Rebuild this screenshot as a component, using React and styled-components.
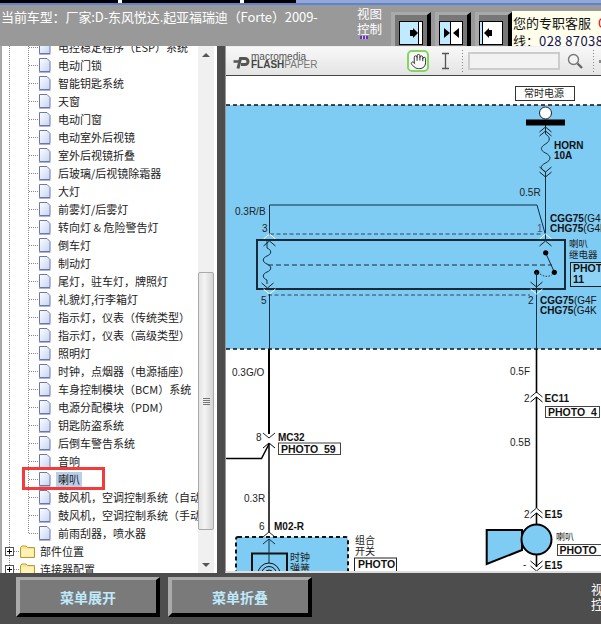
import React from 'react';
import styled, { createGlobalStyle } from 'styled-components';
import { Hand } from 'lucide-react';

const CJK = `"Noto Sans CJK SC", "Liberation Sans", sans-serif`;
const LATIN = `"Liberation Sans", "Noto Sans CJK SC", sans-serif`;

const GlobalStyle = createGlobalStyle`
  html, body { margin: 0; padding: 0; background: #4d4d4d; }
  * { box-sizing: border-box; }
`;

const Page = styled.div`
  width: 601px; height: 624px;
  display: flex; flex-direction: column;
  overflow: hidden;
  font-family: ${CJK};
`;

/* header */
const TitleStrip = styled.div`
  height: 5px; flex: none;
  background: linear-gradient(#93a8d6 0 3px, #5f84cf 3px 5px);
  display: flex;
`;
const TitleDark = styled.div`
  width: 296px; height: 3px;
  background: repeating-linear-gradient(90deg, #000 0 118px, #fff 118px 122px);
`;
const Header = styled.header`
  height: 41px; flex: none;
  background: #999;
  display: flex;
  overflow: hidden;
`;
const Model = styled.div`
  width: 357px; flex: none;
  padding: 2px 0 0 1px;
  color: #fff; font-size: 13px; line-height: 20px;
  letter-spacing: -0.1px;
  white-space: nowrap;
`;
const ViewLabel = styled.div`
  width: 34px; flex: none;
  padding-top: 1px;
  color: #fff; font-size: 12.5px; line-height: 15px;
`;
const Marks = styled.div`
  width: 8px; height: 3px; margin-left: 3px;
  background: repeating-linear-gradient(90deg, #6a2fd0 0 2px, #d8d0f0 2px 3px);
`;
const ViewButtons = styled.div`
  display: flex; gap: 4px;
  padding-top: 7px;
`;
const ViewButton = styled.button`
  width: ${p => p.$w}px; height: 34px;
  margin: 0; padding: 5px 0 0 ${p => p.$pad}px;
  background: #777;
  border-style: solid;
  border-width: 3px 4px 0 4px;
  border-color: #aaa #000 #aaa #aaa;
  display: block;
`;
const Ad = styled.div`
  flex: 1; margin-top: 6px;
  background: #ffffec;
  padding: 3px 0 0 1px;
  color: #111; font-size: 13px; line-height: 18px;
  white-space: nowrap; overflow: hidden;
`;
const Red = styled.span`color: #e00; margin-left: 7px;`;
const Phone = styled.span`color: #101060; letter-spacing: 0.4px;`;

/* middle */
const Main = styled.main`
  flex: 1; min-height: 0;
  display: flex;
  background: #4d4d4d;
`;
const TreePanel = styled.aside`
  width: 217px; flex: none;
  background: #fff;
  border-left: 2px solid #a8a8a8;
  padding-right: 3px;
  display: flex;
  overflow: hidden;
`;
const Tree = styled.div`
  width: 196px; flex: none;
  overflow: hidden;
  background: repeating-linear-gradient(#888 0 1px, transparent 1px 2px) 7px 0 / 1px 100% no-repeat;
`;
const Branch = styled.div`
  margin-top: -8px;
  background: repeating-linear-gradient(#888 0 1px, transparent 1px 2px) 26px 0 / 1px calc(100% - 9px) no-repeat;
`;
const Row = styled.div`
  position: relative;
  height: 18px;
  display: flex; align-items: center;
  padding-left: ${p => (p.$root ? 3 : 27)}px;
  font-size: 11px; color: #222;
  white-space: nowrap;
  ${p => p.$marked && `
    &::after {
      content: '';
      box-sizing: border-box;
      position: absolute;
      left: 20px; top: -3px;
      width: 83px; height: 23px;
      border: 3px solid #f23b3b;
    }
  `}
`;
const Stub = styled.span`
  width: ${p => p.$w}px; height: 1px; flex: none;
  background: repeating-linear-gradient(90deg, #888 0 1px, transparent 1px 2px);
`;
const PlusBox = styled.span`
  position: relative;
  width: 9px; height: 9px; flex: none;
  border: 1px solid #555; background: #fff;
  &::before { content: ''; position: absolute; left: 1px; top: 3px; width: 5px; height: 1px; background: #000; }
  &::after { content: ''; position: absolute; left: 3px; top: 1px; width: 1px; height: 5px; background: #000; }
`;
const Label = styled.span`
  margin-left: ${p => p.$gap}px;
  padding: 0 2px;
  line-height: 15px;
  background: ${p => (p.$selected ? '#b9cfe9' : 'transparent')};
`;
const Scrollbar = styled.div`
  width: 16px; flex: none;
  background: #f0f0f0;
  display: flex; flex-direction: column;
`;
const ArrowCell = styled.div`
  height: 17px; flex: none;
  display: flex; align-items: center; justify-content: center;
  margin-top: ${p => (p.$end ? 'auto' : '0')};
`;
const Arrow = styled.span`
  width: 0; height: 0;
  border-left: 4px solid transparent;
  border-right: 4px solid transparent;
  ${p => (p.$down ? 'border-top: 4px solid #555;' : 'border-bottom: 4px solid #555;')}
`;
const Thumb = styled.div`
  height: 258px; flex: none;
  margin-top: 209px;
  border: 1px solid #aaa;
  border-radius: 2px;
  background: linear-gradient(90deg, #e4e4e4, #f4f4f4 40%, #d4d4d4);
  display: flex; flex-direction: column; align-items: center; justify-content: center; gap: 1px;
`;
const Grip = styled.span`
  width: 7px; height: 1px; background: #777;
`;
const Viewer = styled.section`
  margin-left: 8px;
  flex: 1; min-width: 0;
  background: #fff;
  border-left: 1px solid #999;
  border-bottom: 2px solid #ddd;
  display: flex; flex-direction: column;
`;
const Toolbar = styled.div`
  height: 30px; flex: none;
  padding-left: 7px;
  border-top: 1px solid #eee;
  border-bottom: 1px solid #444;
  background: linear-gradient(#f8f8f8, #e4e4e4);
  display: flex; align-items: center;
  overflow: hidden;
`;
const Logo = styled.div`
  width: 174px; flex: none;
  display: flex; align-items: center; gap: 1px;
`;
const LogoText = styled.div`
  font-family: ${LATIN};
  color: #555;
`;
const LogoTop = styled.div`font-size: 10px; line-height: 7px;`;
const LogoBottom = styled.div`font-size: 10px; line-height: 9px; font-weight: 700; color: #444;`;
const LogoThin = styled.span`font-weight: 400; color: #777;`;
const HandButton = styled.button`
  width: 22px; height: 22px; flex: none;
  padding: 0; margin: 0;
  border: 2px solid #7fd860;
  border-radius: 5px;
  background: #fafafa;
  color: #333;
  display: flex; align-items: center; justify-content: center;
`;
const IBeam = styled.svg`flex: none; margin-left: 12px;`;
const Separator = styled.span`
  width: 1px; height: 22px; flex: none;
  margin: ${p => p.$margin};
  background: repeating-linear-gradient(#888 0 1px, transparent 1px 3px);
`;
const SearchBox = styled.input`
  width: 92px; height: 18px; flex: none;
  border: 2px solid #ccc;
  background: #f2f2f2;
  padding: 0;
`;
const Magnifier = styled.svg`flex: none; margin-left: 7px;`;
const SmallIcon = styled.svg`flex: none;`;
const Diagram = styled.svg`
  flex: 1; min-height: 0;
  display: block;
  width: 375px;
`;
const Bold = styled.text`
  font-family: ${LATIN}; font-weight: 700; font-size: ${p => p.$size || 10}px; fill: #111;
  white-space: pre;
`;
const Thin = styled.text`
  font-family: ${LATIN}; font-size: ${p => p.$size || 10}px; fill: ${p => p.$fill || '#222'};
`;
const Han = styled.text`
  font-family: ${CJK}; font-size: ${p => p.$size || 9.5}px; fill: #222;
`;

/* footer */
const Footer = styled.footer`
  height: 51px; flex: none;
  background: #4d4d4d;
  padding: 4px 0 0 16px;
  display: flex; gap: 8px;
`;
const MenuButton = styled.button`
  width: 144px; height: 40px;
  margin: 0; padding: 0;
  background: #7a7a7a;
  border-style: solid;
  border-width: 3px 4px 4px 4px;
  border-color: #aaa #000 #000 #aaa;
  color: #bfe9fb;
  font-family: ${CJK}; font-size: 14px; font-weight: 700;
`;
const FooterView = styled.div`
  margin-left: auto;
  width: 10px; overflow: hidden;
  padding-top: 4px;
  color: #fff; font-size: 13px; line-height: 15px;
  white-space: nowrap;
`;

const items = [
  '电控稳定程序（ESP）系统', '电动门锁', '智能钥匙系统', '天窗', '电动门窗', '电动室外后视镜',
  '室外后视镜折叠', '后玻璃/后视镜除霜器', '大灯', '前雾灯/后雾灯', '转向灯 & 危险警告灯',
  '倒车灯', '制动灯', '尾灯，驻车灯，牌照灯', '礼貌灯,行李箱灯', '指示灯，仪表（传统类型）',
  '指示灯，仪表（高级类型）', '照明灯', '时钟，点烟器（电源插座）', '车身控制模块（BCM）系统',
  '电源分配模块（PDM）', '钥匙防盗系统', '后倒车警告系统', '音响', '喇叭',
  '鼓风机，空调控制系统（自动', '鼓风机，空调控制系统（手动', '前雨刮器，喷水器',
];

const DocIcon = () => (
  <SmallIcon width="13" height="15" viewBox="0 0 13 15">
    <defs>
      <linearGradient id="doc" x1="0" y1="0" x2="1" y2="1">
        <stop offset="0" stopColor="#fff" />
        <stop offset="1" stopColor="#c4d4f2" />
      </linearGradient>
    </defs>
    <path d="M1.5 .5H9L12 3.5V13.5H1.5Z" fill="url(#doc)" stroke="#6d76ac" />
    <path d="M1 14.5H12.5" stroke="#b0b4cc" />
  </SmallIcon>
);

const FolderIcon = () => (
  <SmallIcon width="15" height="13" viewBox="0 0 15 13">
    <path d="M.5 2.5 2 1H6L7.5 2.5H14.5V12.5H.5Z" fill="#fce68a" stroke="#b59a3c" />
    <path d="M1.5 4H13.5V11.5H1.5Z" fill="#fff2b4" />
  </SmallIcon>
);

const SplitIcon = ({ blue, white, arrows }) => (
  <svg width="24" height="24" viewBox="0 0 24 24" style={{ display: 'block' }}>
    <rect x=".5" y=".5" width="23" height="23" fill="#bfeaff" stroke="#000" />
    <rect x={blue} y="1" width={white} height="22" fill="#fff" />
    <path d={`M${blue - 0.5} 1V23`} stroke="#000" />
    {arrows.map(d => <path key={d} d={d} fill="#000" />)}
  </svg>
);

const Chevron = ({ x, y, down, stroke = '#222' }) => (
  <polyline
    points={down ? `${x - 6},${y - 5} ${x},${y} ${x + 6},${y - 5}` : `${x - 6},${y + 5} ${x},${y} ${x + 6},${y + 5}`}
    fill="none" stroke={stroke} strokeWidth="1"
  />
);

function WiringDiagram() {
  return (
    <Diagram viewBox="226 76 375 495">
      <rect x="226" y="105" width="375" height="244" fill="#7ecbf4" />
      <line x1="226" y1="105" x2="601" y2="105" stroke="#111" strokeWidth="1.3" strokeDasharray="4 3" />
      <line x1="226" y1="349" x2="601" y2="349" stroke="#111" strokeWidth="1.3" strokeDasharray="4 3" />

      <rect x="515.5" y="86.5" width="59" height="14" fill="#fff" stroke="#333" />
      <Han x="524" y="97" $size="10">常时电源</Han>

      {/* fuse branch */}
      <line x1="545.5" y1="125" x2="545.5" y2="134" stroke="#12303f" />
      <path d="M545.5 134c5 3 5 7 0 10s-6 6 0 9 6 7 0 10-5 6 0 9V240" fill="none" stroke="#12303f" />
      <circle cx="545.5" cy="113" r="6" fill="#fff" stroke="#222" />
      <rect x="526" y="119.5" width="39" height="6" fill="#000" />
      <Chevron x={545.5} y={127} />
      <Chevron x={545.5} y={131} />
      <Chevron x={545.5} y={172} down />
      <Chevron x={545.5} y={177} down />
      <Bold x="554" y="149">HORN</Bold>
      <Bold x="554" y="159">10A</Bold>
      <Thin x="519.5" y="196">0.5R</Thin>

      {/* relay */}
      <path d="M269.5 235V205H537L545.5 235" fill="none" stroke="#12303f" />
      <Thin x="235" y="215">0.3R/B</Thin>
      <Thin x="262" y="232">3</Thin>
      <Thin x="537" y="232" $fill="#557">1</Thin>
      <line x1="270" y1="234" x2="541" y2="234" stroke="#345" strokeDasharray="4 2.5" />
      <Chevron x={269.5} y={234} stroke="#fff" />
      <Chevron x={545.5} y={234} stroke="#fff" />
      <Bold x="550" y="222">CGG75<tspan fontWeight="400">(G4F</tspan></Bold>
      <Bold x="550" y="232">CHG75<tspan fontWeight="400">(G4K</tspan></Bold>
      <rect x="257" y="240" width="308" height="49" fill="none" stroke="#1a2a36" strokeWidth="2" />
      <Chevron x={269.5} y={241} />
      <Chevron x={545.5} y={241} />
      <line x1="267" y1="241" x2="267" y2="248" stroke="#12303f" />
      <path d="M267 248c5 2 5 6 0 8s-5 6 0 8 5 6 0 8-5 6 0 8v4" fill="none" stroke="#12303f" />
      <line x1="268" y1="265" x2="552" y2="265" stroke="#1a2a36" strokeDasharray="5 3" />
      <line x1="545.7" y1="253" x2="554.3" y2="272" stroke="#1a2a36" />
      <path d="M540 274q6 4 12 1" fill="none" stroke="#1a2a36" strokeDasharray="1.5 1.5" />
      <circle cx="545.7" cy="252.8" r="2.6" fill="#000" />
      <circle cx="554.3" cy="272.3" r="2.6" fill="#000" />
      <circle cx="536.7" cy="272.3" r="2.6" fill="#000" />
      <line x1="536.5" y1="272" x2="536.5" y2="349" stroke="#12303f" />
      <Chevron x={267.5} y={288} down />
      <Chevron x={536.5} y={287} down />
      <Chevron x={269.5} y={294} down stroke="#fff" />
      <Chevron x={536.5} y={294} down stroke="#fff" />
      <line x1="268" y1="295" x2="530" y2="295" stroke="#345" strokeDasharray="4 2.5" />
      <line x1="269.5" y1="294" x2="269.5" y2="349" stroke="#12303f" />
      <Thin x="261" y="304">5</Thin>
      <Thin x="528" y="304">2</Thin>
      <Bold x="540" y="304">CGG75<tspan fontWeight="400">(G4F</tspan></Bold>
      <Bold x="540" y="314">CHG75<tspan fontWeight="400">(G4K</tspan></Bold>
      <Han x="569" y="247">喇叭</Han>
      <Han x="569" y="258">继电器</Han>
      <rect x="570.5" y="262.5" width="40" height="24" fill="#8ed2f6" stroke="#222" />
      <Bold x="573" y="272" $size="10.5">PHOTO</Bold>
      <Bold x="573" y="283" $size="10.5">11</Bold>

      {/* left run */}
      <line x1="269" y1="349" x2="269" y2="434" stroke="#000" strokeWidth="2" />
      <Thin x="232" y="376">0.3G/O</Thin>
      <Thin x="256" y="441">8</Thin>
      <Chevron x={269} y={438} down />
      <Chevron x={269} y={443} stroke="#000" />
      <path d="M226 458.5H261.5L269 444" fill="none" stroke="#000" strokeWidth="1.5" />
      <line x1="269" y1="444" x2="269" y2="532" stroke="#000" strokeWidth="1.5" />
      <Bold x="278" y="441">MC32</Bold>
      <rect x="278.5" y="443" width="62" height="11.5" fill="#fff" stroke="#444" />
      <Bold x="281" y="452.5" $size="10.5">PHOTO  59</Bold>
      <Thin x="244" y="502">0.3R</Thin>
      <Thin x="259" y="530">6</Thin>
      <Bold x="274" y="530">M02-R</Bold>
      <Chevron x={269} y={532} />

      <rect x="236" y="537" width="112" height="60" rx="2" fill="#7ecbf4" stroke="#111" strokeWidth="2" strokeDasharray="4 3" />
      <rect x="252" y="553.5" width="35" height="40" fill="none" stroke="#111" strokeWidth="2" />
      <line x1="269" y1="539" x2="269" y2="563" stroke="#12303f" />
      <Chevron x={269} y={539} stroke="#12303f" />
      <circle cx="269" cy="574" r="4" fill="none" stroke="#111" />
      <circle cx="269" cy="574" r="7.5" fill="none" stroke="#111" />
      <circle cx="269" cy="574" r="11" fill="none" stroke="#111" />
      <Han x="290" y="561" $size="10">时钟</Han>
      <Han x="290" y="572" $size="10">弹簧</Han>
      <Han x="355" y="544" $size="10">组合</Han>
      <Han x="355" y="555" $size="10">开关</Han>
      <rect x="354.5" y="558" width="42" height="24" fill="#fff" stroke="#222" />
      <Bold x="358" y="568" $size="10.5">PHOTO</Bold>

      {/* right run */}
      <line x1="536.5" y1="349" x2="536.5" y2="393" stroke="#000" strokeWidth="1.6" />
      <Thin x="510" y="375">0.5F</Thin>
      <Thin x="524" y="402">2</Thin>
      <Chevron x={536.5} y={392} />
      <Chevron x={536.5} y={397} stroke="#000" />
      <Bold x="544.5" y="402">EC11</Bold>
      <rect x="545.5" y="406.5" width="54" height="11" fill="#fff" stroke="#444" />
      <Bold x="548" y="415.5" $size="10.5">PHOTO  4</Bold>
      <line x1="536.5" y1="397" x2="536.5" y2="508" stroke="#000" strokeWidth="1.6" />
      <Thin x="510" y="446">0.5B</Thin>
      <Thin x="524" y="518">2</Thin>
      <Chevron x={536.5} y={508} />
      <Chevron x={536.5} y={513} stroke="#000" />
      <line x1="536.5" y1="513" x2="536.5" y2="526" stroke="#000" strokeWidth="1.6" />
      <Bold x="544.5" y="518">E15</Bold>
      <polygon points="486.7,530 522,530 522,550 486.7,564" fill="#7ecbf4" stroke="#000" strokeWidth="2" />
      <circle cx="536.5" cy="539.5" r="15" fill="#7ecbf4" stroke="#000" strokeWidth="2" />
      <Han x="556" y="540" $size="9">喇叭</Han>
      <rect x="557.5" y="544.5" width="50" height="11" fill="#fff" stroke="#444" />
      <Bold x="559.5" y="553.5" $size="10.5">PHOTO</Bold>
      <line x1="536.5" y1="555" x2="536.5" y2="567" stroke="#000" strokeWidth="1.6" />
      <Chevron x={536.5} y={566} down stroke="#000" />
      <Chevron x={536.5} y={571} down />
      <Thin x="523" y="568">-</Thin>
      <Bold x="544.5" y="569">E15</Bold>
    </Diagram>
  );
}

export default function App() {
  return (
    <Page>
      <GlobalStyle />
      <TitleStrip><TitleDark /></TitleStrip>
      <Header>
        <Model>当前车型：厂家:D-东风悦达.起亚福瑞迪（Forte）2009-</Model>
        <ViewLabel>
          视图<br />控制
          <Marks />
        </ViewLabel>
        <ViewButtons>
          <ViewButton $w={40} $pad={4}>
            <SplitIcon blue={20} white={3} arrows={['M19 12l-5-5V17Z', 'M11 9h3V15h-3Z']} />
          </ViewButton>
          <ViewButton $w={36} $pad={0}>
            <SplitIcon blue={12} white={11} arrows={['M11 12L5 7V17Z', 'M14 12L20 7V17Z']} />
          </ViewButton>
          <ViewButton $w={37} $pad={0}>
            <SplitIcon blue={4} white={19} arrows={['M5 12l5-5V17Z', 'M10 9h3V15h-3Z']} />
          </ViewButton>
        </ViewButtons>
        <Ad>
          您的专职客服<Red>QQ</Red><br />
          线：<Phone>028 87038211</Phone>
        </Ad>
      </Header>
      <Main>
        <TreePanel>
          <Tree>
            <Branch>
              {items.map(name => (
                <Row key={name} $marked={name === '喇叭'}>
                  <Stub $w={9} />
                  <DocIcon />
                  <Label $gap={5} $selected={name === '喇叭'}>{name}</Label>
                </Row>
              ))}
            </Branch>
            {['部件位置', '连接器配置'].map(name => (
              <Row key={name} $root>
                <PlusBox />
                <Stub $w={6} />
                <FolderIcon />
                <Label $gap={3}>{name}</Label>
              </Row>
            ))}
          </Tree>
          <Scrollbar>
            <ArrowCell><Arrow /></ArrowCell>
            <Thumb><Grip /><Grip /><Grip /><Grip /></Thumb>
            <ArrowCell $end><Arrow $down /></ArrowCell>
          </Scrollbar>
        </TreePanel>
        <Viewer>
          <Toolbar>
            <Logo>
              <SmallIcon width="17" height="17" viewBox="0 0 17 17">
                <path d="M5 15.5 7.5 5.5H12a2.5 2.5 0 0 1 0 6H8" fill="none" stroke="#555" strokeWidth="3" />
                <path d="M0.5 8.5H6" stroke="#555" strokeWidth="2.5" />
              </SmallIcon>
              <LogoText>
                <LogoTop>macromedia</LogoTop>
                <LogoBottom>FLASH<LogoThin>PAPER</LogoThin></LogoBottom>
              </LogoText>
            </Logo>
            <HandButton><Hand size={17} strokeWidth={1.4} /></HandButton>
            <IBeam width="9" height="18" viewBox="0 0 9 18">
              <path d="M1 1.5H8M1 16.5H8M4.5 1.5V16.5" stroke="#555" strokeWidth="1.3" fill="none" />
            </IBeam>
            <Separator $margin="0 5px 0 12px" />
            <SearchBox readOnly />
            <Magnifier width="16" height="16" viewBox="0 0 16 16">
              <circle cx="6.5" cy="6.5" r="5" fill="#f4f4f4" stroke="#777" strokeWidth="1.4" />
              <path d="M10.5 10.5 15 15" stroke="#666" strokeWidth="2.4" />
            </Magnifier>
            <Separator $margin="0 5px 0 10px" />
            <SmallIcon width="5" height="3" viewBox="0 0 5 3">
              <rect width="5" height="3" fill="#888" />
            </SmallIcon>
          </Toolbar>
          <WiringDiagram />
        </Viewer>
      </Main>
      <Footer>
        <MenuButton>菜单展开</MenuButton>
        <MenuButton>菜单折叠</MenuButton>
        <FooterView>视图<br />控制</FooterView>
      </Footer>
    </Page>
  );
}
